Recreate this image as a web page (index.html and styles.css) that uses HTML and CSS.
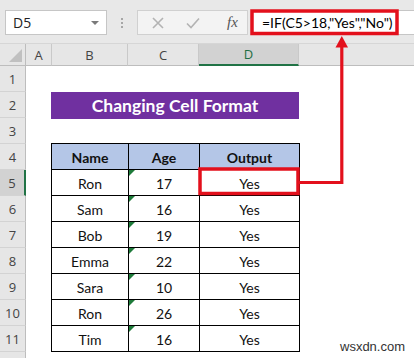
FILE: index.html
```html
<!DOCTYPE html>
<html>
<head>
<meta charset="utf-8">
<link rel="stylesheet" href="styles.css">
</head>
<body>
<div class="app">
  <div class="toolbar">
    <div class="namebox"><span class="nb-text">D5</span><span class="caret"></span></div>
    <div class="dots"><i></i><i></i><i></i></div>
    <div class="fbtns">
      <svg class="ico" width="12" height="12" viewBox="0 0 12 12"><path d="M1 1L11 11M11 1L1 11" stroke="#b3b3b3" stroke-width="1.6" fill="none"/></svg>
      <svg class="ico" width="14" height="12" viewBox="0 0 14 12"><path d="M1 6.5L5 10.5L13 1.5" stroke="#b3b3b3" stroke-width="1.6" fill="none"/></svg>
      <span class="fx">fx</span>
    </div>
    <div class="fbar"><span class="formula">=IF(C5&gt;18,"Yes","No")</span></div>
  </div>
  <div class="sheet">
    <div class="ch corner"><span class="tri"></span></div>
    <div class="ch">A</div>
    <div class="ch">B</div>
    <div class="ch">C</div>
    <div class="ch sel">D</div>
    <div class="ch last"></div>

    <div class="rh r1">1</div>
    <div class="rh r2">2</div>
    <div class="rh r3">3</div>
    <div class="rh r4">4</div>
    <div class="rh r5 rsel">5</div>
    <div class="rh r6">6</div>
    <div class="rh r7">7</div>
    <div class="rh r8">8</div>
    <div class="rh r9">9</div>
    <div class="rh r10">10</div>
    <div class="rh r11">11</div>
    <div class="rh r12"></div>

    <div class="title">Changing Cell Format</div>

    <div class="tbl">
      <div class="c hd">Name</div><div class="c hd">Age</div><div class="c hd">Output</div>
      <div class="c">Ron</div><div class="c age">17</div><div class="c">Yes</div>
      <div class="c">Sam</div><div class="c age">16</div><div class="c">Yes</div>
      <div class="c">Bob</div><div class="c age">19</div><div class="c">Yes</div>
      <div class="c">Emma</div><div class="c age">22</div><div class="c">Yes</div>
      <div class="c">Sara</div><div class="c age">10</div><div class="c">Yes</div>
      <div class="c">Ron</div><div class="c age">26</div><div class="c">Yes</div>
      <div class="c">Tim</div><div class="c age">16</div><div class="c">Yes</div>
    </div>
  </div>
  <div class="wm">wsxdn.com</div>
  <svg class="overlay" width="414" height="358" viewBox="0 0 414 358">
    <rect x="252" y="11" width="145" height="22.5" fill="none" stroke="#e3101c" stroke-width="3.5"/>
    <rect x="200" y="169" width="98" height="24.5" fill="none" stroke="#e3101c" stroke-width="3.5"/>
    <path d="M298 182.5H341.8V44" fill="none" stroke="#e3101c" stroke-width="3.2"/>
    <polygon points="341.8,36 335.5,47.5 348,47.5" fill="#e3101c"/>
  </svg>
</div>
</body>
</html>
```

FILE: styles.css
```css
* { box-sizing: border-box; }
html, body { margin: 0; padding: 0; }
body { width: 414px; height: 358px; overflow: hidden; background: #fff; }
.app { position: relative; width: 414px; height: 358px; overflow: hidden; }

.toolbar {
  height: 44px;
  background: #e8e8e8;
  display: flex;
  align-items: flex-start;
  padding-top: 10px;
  border-bottom: 1px solid #d6d6d6;
}
.namebox {
  margin-left: 5px;
  width: 102px;
  height: 25px;
  background: #fff;
  border: 1px solid #c6c6c6;
  display: flex;
  align-items: center;
  justify-content: space-between;
  padding: 0 7px 0 7px;
  font: 14px "Open Sans", sans-serif;
  color: #222;
}
.caret {
  width: 0; height: 0;
  border-left: 4px solid transparent;
  border-right: 4px solid transparent;
  border-top: 4px solid #7a7a7a;
}
.dots {
  width: 30px;
  height: 25px;
  display: flex;
  flex-direction: column;
  align-items: center;
  justify-content: center;
  gap: 2px;
}
.dots i { display: block; width: 2px; height: 2px; background: #a6a6a6; }
.fbtns {
  width: 111px;
  height: 25px;
  background: #f3f3f3;
  border: 1px solid #d0d0d0;
  display: flex;
  align-items: center;
  padding-left: 14px;
  gap: 22px;
}
.fx {
  font: italic 15px "Liberation Serif", serif;
  color: #555;
  margin-left: 5px;
}
.fbar {
  flex: 1;
  margin-left: 3px;
  height: 25px;
  background: #fff;
  border: 1px solid #c6c6c6;
  border-right: none;
  display: flex;
  align-items: center;
  padding-left: 10px;
  font: 14px "Lato", sans-serif;
  color: #000;
}

.sheet {
  display: grid;
  grid-template-columns: 26px 26px 76px 71px 100px 1fr;
  grid-template-rows: 22px repeat(11, 26px) 6px;
  background: #fff;
}
.ch {
  grid-row: 1;
  background: #e6e6e6;
  border-right: 1px solid #c9c9c9;
  border-bottom: 1px solid #bdbdbd;
  display: flex;
  align-items: center;
  justify-content: center;
  font: 13px "Open Sans", sans-serif;
  color: #444;
}
.ch.last { border-right: none; }
.ch.sel {
  background: #d2d2d2;
  color: #1f6e43;
  border-bottom: 2px solid #217346;
}
.corner { position: relative; border-right-color: #bdbdbd; }
.tri {
  position: absolute;
  right: 3px;
  bottom: 3px;
  width: 0; height: 0;
  border-left: 13px solid transparent;
  border-bottom: 13px solid #c0c0c0;
}
.rh {
  grid-column: 1;
  background: #e6e6e6;
  border-right: 1px solid #bdbdbd;
  border-bottom: 1px solid #d3d3d3;
  display: flex;
  align-items: center;
  justify-content: center;
  font: 13px "Open Sans", sans-serif;
  color: #444;
}
.r1 { grid-row: 2; } .r2 { grid-row: 3; } .r3 { grid-row: 4; } .r4 { grid-row: 5; }
.r5 { grid-row: 6; } .r6 { grid-row: 7; } .r7 { grid-row: 8; } .r8 { grid-row: 9; }
.r9 { grid-row: 10; } .r10 { grid-row: 11; } .r11 { grid-row: 12; } .r12 { grid-row: 13; border-bottom: none; }
.rsel { background: #d2d2d2; border-right: 2px solid #217346; }

.title {
  grid-row: 3;
  grid-column: 3 / 6;
  margin-left: -1px;
  margin-bottom: -1px;
  background: #7030a0;
  color: #fff;
  font: bold 17.5px "Lato", sans-serif;
  display: flex;
  align-items: center;
  justify-content: center;
}

.tbl {
  grid-row: 5 / 13;
  grid-column: 3 / 6;
  margin: -1px 0 0 -1px;
  align-self: start;
  justify-self: start;
  display: grid;
  grid-template-columns: 77px 71px 100px;
  grid-auto-rows: 26px;
  border-top: 1px solid #000;
  border-left: 1px solid #000;
}
.c {
  border-right: 1px solid #000;
  border-bottom: 1px solid #000;
  display: flex;
  align-items: center;
  justify-content: center;
  font: 14px "Lato", sans-serif;
  color: #111;
  padding-top: 1px;
}
.c.hd { background: #b4c6e7; font-weight: bold; }
.age { position: relative; }
.age::before {
  content: "";
  position: absolute;
  left: 0;
  top: 0;
  border-top: 6px solid #1e7b3a;
  border-right: 6px solid transparent;
}

.wm {
  position: absolute;
  left: 340px;
  top: 339px;
  font: 13px "Liberation Sans", sans-serif;
  color: #333;
}
.overlay { position: absolute; left: 0; top: 0; pointer-events: none; }
```
